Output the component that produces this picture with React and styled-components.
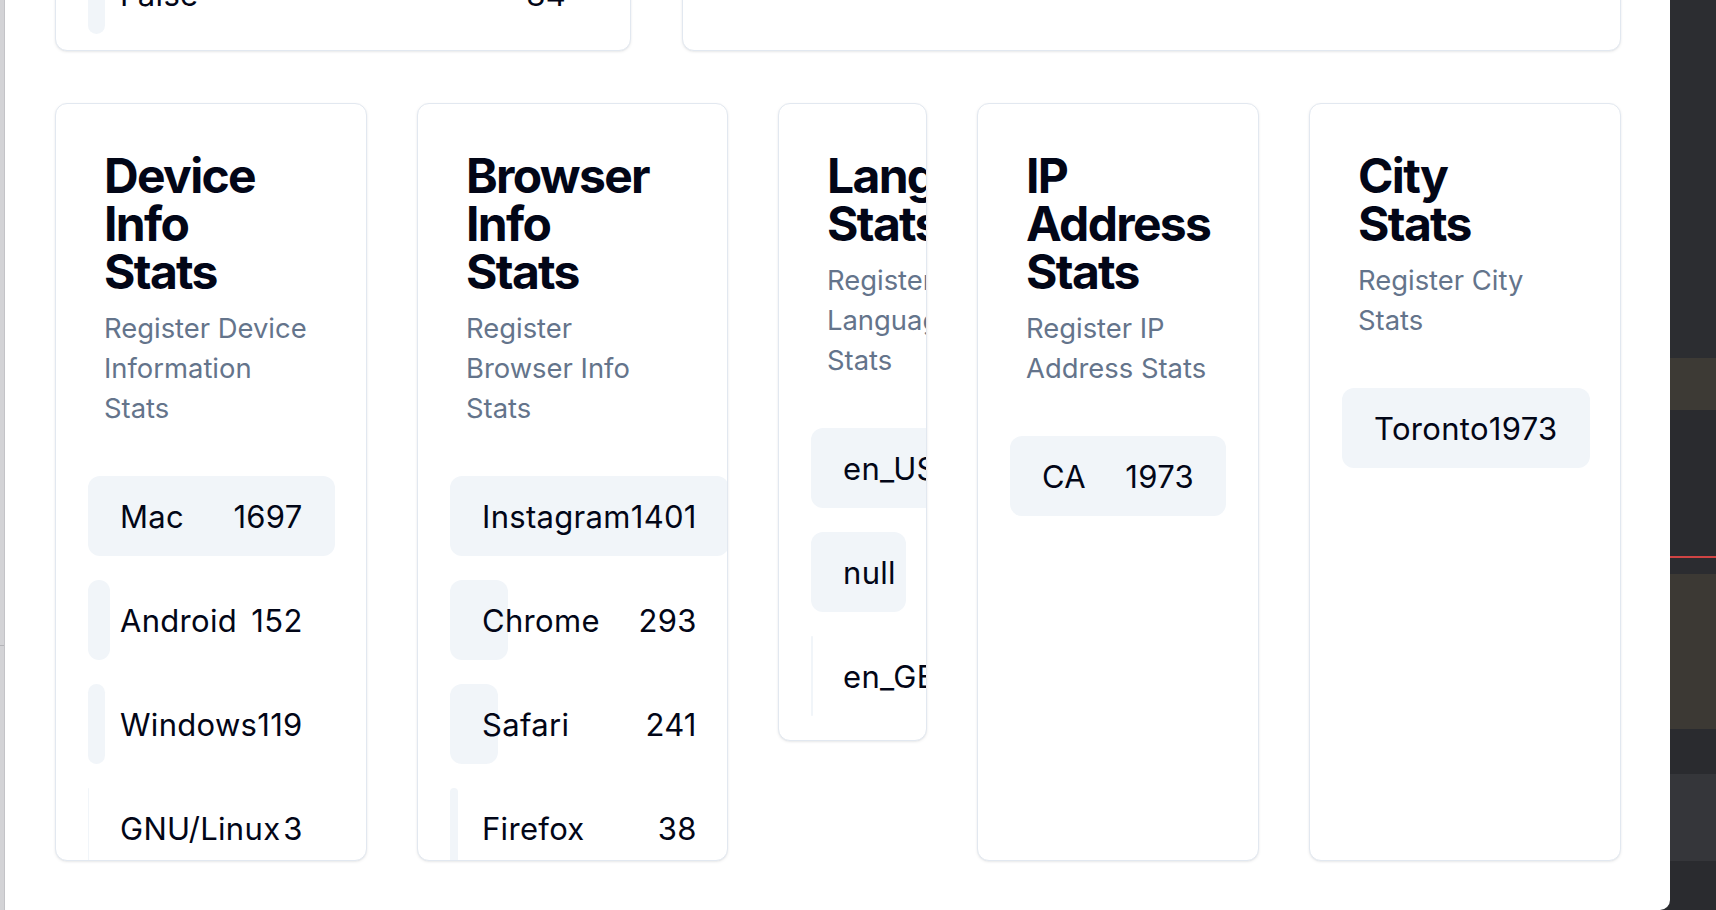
import React from 'react';
import styled, { createGlobalStyle } from 'styled-components';

const GlobalStyle = createGlobalStyle`
  html, body {
    margin: 0;
    padding: 0;
    height: 100%;
    overflow: hidden;
  }
  body {
    font-family: Inter, "Noto Sans", sans-serif;
    background: #2b2c30;
  }
`;

const Screen = styled.div`
  display: flex;
  height: 100vh;
  background: #2b2c30;
`;

const LeftEdge = styled.div`
  position: relative;
  width: 5px;
  flex: none;
  background: #d3d3d6;
  box-shadow: inset -1px 0 0 #c3c3c7;
  &::after {
    content: '';
    position: absolute;
    left: 0;
    right: 1px;
    top: 645px;
    height: 1px;
    background: #b4b4b8;
  }
`;

const Sheet = styled.main`
  flex: 1;
  min-width: 0;
  background: #ffffff;
  border-bottom-right-radius: 10px;
  overflow: hidden;
  padding: 0 49px 0 50px;
`;

const RightDock = styled.aside`
  width: 46px;
  flex: none;
  display: flex;
  flex-direction: column;
`;

const DockBand = styled.div`
  height: ${(p) => p.$h}px;
  flex: ${(p) => (p.$grow ? 1 : 'none')};
  background: ${(p) => p.$bg};
`;

const TopRow = styled.div`
  display: grid;
  grid-template-columns: 576px 1fr;
  gap: 51px;
  margin-top: -199px;
`;

const BottomRow = styled.div`
  display: flex;
  align-items: flex-start;
  gap: 50px;
  margin-top: 52px;
`;

const Card = styled.section`
  box-sizing: border-box;
  width: ${(p) => (p.$w ? `${p.$w}px` : 'auto')};
  height: ${(p) => (p.$h ? `${p.$h}px` : 'auto')};
  flex: none;
  padding: 48px 48px ${(p) => p.$pb ?? 24}px;
  background: #ffffff;
  border: 1px solid #e2e8f0;
  border-radius: 12px;
  box-shadow: 0 1px 3px 0 rgba(15, 23, 42, 0.08), 0 1px 2px -1px rgba(15, 23, 42, 0.08);
  overflow: hidden;
`;

const Title = styled.h2`
  width: min-content;
  margin: 0;
  font-size: 48px;
  line-height: 48px;
  font-weight: 750;
  letter-spacing: -0.035em;
  color: #020617;
`;

const Desc = styled.p`
  margin: 12px 0 0;
  font-size: 27.4px;
  line-height: 40px;
  color: #64748b;
`;

const List = styled.div`
  display: flex;
  flex-direction: column;
  gap: 24px;
  width: max-content;
  min-width: calc(100% + 32px);
  margin: ${(p) => (p.$flush ? '0' : '48px')} -16px 0;
`;

const Row = styled.div`
  position: relative;
  display: flex;
  align-items: center;
  justify-content: space-between;
  height: 80px;
  padding: 0 32px;
  font-size: 31px;
  letter-spacing: 0.01em;
  color: #020617;
  white-space: nowrap;
`;

const Bar = styled.div`
  position: absolute;
  left: 0;
  top: 0;
  bottom: 0;
  background: #f1f5f9;
  border-radius: 12px;
`;

const Label = styled.span`
  position: relative;
`;

const Value = styled.span`
  position: relative;
`;

const BarList = ({ data, flush }) => {
  const max = Math.max(...data.map((d) => d.value));
  return (
    <List $flush={flush}>
      {data.map((d) => (
        <Row key={d.name}>
          <Bar style={{ width: `${(d.value / max) * 100}%` }} />
          <Label>{d.name}</Label>
          <Value>{d.value}</Value>
        </Row>
      ))}
    </List>
  );
};

const StatCard = ({ title, desc, data, width, height }) => (
  <Card $w={width} $h={height}>
    <Title>{title}</Title>
    <Desc>{desc}</Desc>
    <BarList data={data} />
  </Card>
);

const botData = [
  { name: 'True', value: 2544 },
  { name: 'False', value: 84 },
];

const cards = [
  {
    title: 'Device Info Stats',
    desc: 'Register Device Information Stats',
    width: 312,
    height: 758,
    data: [
      { name: 'Mac', value: 1697 },
      { name: 'Android', value: 152 },
      { name: 'Windows', value: 119 },
      { name: 'GNU/Linux', value: 3 },
    ],
  },
  {
    title: 'Browser Info Stats',
    desc: 'Register Browser Info Stats',
    width: 311,
    height: 758,
    data: [
      { name: 'Instagram', value: 1401 },
      { name: 'Chrome', value: 293 },
      { name: 'Safari', value: 241 },
      { name: 'Firefox', value: 38 },
    ],
  },
  {
    title: 'Language Stats',
    desc: 'Register Language Stats',
    width: 149,
    data: [
      { name: 'en_US', value: 1312 },
      { name: 'null', value: 563 },
      { name: 'en_GB', value: 14 },
    ],
  },
  {
    title: 'IP Address Stats',
    desc: 'Register IP Address Stats',
    width: 282,
    height: 758,
    data: [{ name: 'CA', value: 1973 }],
  },
  {
    title: 'City Stats',
    desc: 'Register City Stats',
    width: 312,
    height: 758,
    data: [{ name: 'Toronto', value: 1973 }],
  },
];

export default function App() {
  return (
    <>
      <GlobalStyle />
      <Screen>
        <LeftEdge />
        <Sheet>
          <TopRow>
            <Card $pb={16}>
              <BarList data={botData} flush />
            </Card>
            <Card $pb={16} />
          </TopRow>
          <BottomRow>
            {cards.map((c) => (
              <StatCard key={c.title} {...c} />
            ))}
          </BottomRow>
        </Sheet>
        <RightDock>
          <DockBand $h={358} $bg="#2c2d31" />
          <DockBand $h={52} $bg="#3d3a35" />
          <DockBand $h={146} $bg="#2a2b2f" />
          <DockBand $h={2} $bg="#d04444" />
          <DockBand $h={16} $bg="#2b2c30" />
          <DockBand $h={155} $bg="#3c3934" />
          <DockBand $h={45} $bg="#2a2b2f" />
          <DockBand $h={87} $bg="#35363a" />
          <DockBand $grow $bg="#2a2b2f" />
        </RightDock>
      </Screen>
    </>
  );
}
